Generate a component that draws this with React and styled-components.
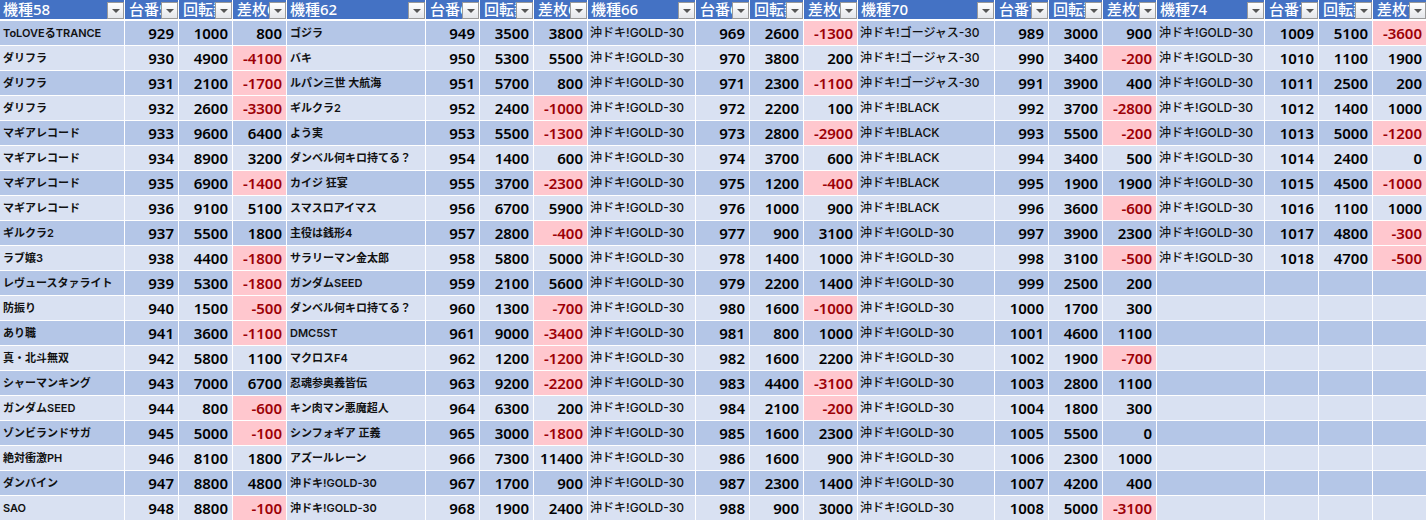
import React from 'react';
import styled, { createGlobalStyle } from 'styled-components';

const GlobalStyle = createGlobalStyle`
    html, body {
        margin: 0;
        padding: 0;
        background: #fff;
        overflow: hidden;
    }
`;

const FONT = `"Noto Sans", "Noto Sans CJK JP", sans-serif`;
const NAME_FONT = `Inter, "Noto Sans CJK JP", sans-serif`;

const gold = '沖ドキ!GOLD-30';
const gorgeous = '沖ドキ!ゴージャス-30';
const black = '沖ドキ!BLACK';

// each row: [name, 回転数, 差枚]. 台番 counts up from the group's first number
const groups = [
    {
        title: 58, width: 125, first: 929, light: false,
        rows: [
            ['ToLOVEるTRANCE', 1000, 800], ['ダリフラ', 4900, -4100], ['ダリフラ', 2100, -1700], ['ダリフラ', 2600, -3300],
            ['マギアレコード', 9600, 6400], ['マギアレコード', 8900, 3200], ['マギアレコード', 6900, -1400], ['マギアレコード', 9100, 5100],
            ['ギルクラ2', 5500, 1800], ['ラブ嬢3', 4400, -1800], ['レヴュースタァライト', 5300, -1800], ['防振り', 1500, -500],
            ['あり職', 3600, -1100], ['真・北斗無双', 5800, 1100], ['シャーマンキング', 7000, 6700], ['ガンダムSEED', 800, -600],
            ['ゾンビランドサガ', 5000, -100], ['絶対衝激PH', 8100, 1800], ['ダンバイン', 8800, 4800], ['SAO', 8800, -100],
        ],
    },
    {
        title: 62, width: 139, first: 949, light: false,
        rows: [
            ['ゴジラ', 3500, 3800], ['バキ', 5300, 5500], ['ルパン三世 大航海', 5700, 800], ['ギルクラ2', 2400, -1000],
            ['よう実', 5500, -1300], ['ダンベル何キロ持てる？', 1400, 600], ['カイジ 狂宴', 3700, -2300], ['スマスロアイマス', 6700, 5900],
            ['主役は銭形4', 2800, -400], ['サラリーマン金太郎', 5800, 5000], ['ガンダムSEED', 2100, 5600], ['ダンベル何キロ持てる？', 1300, -700],
            ['DMC5ST', 9000, -3400], ['マクロスF4', 1200, -1200], ['忍魂参奥義皆伝', 9200, -2200], ['キン肉マン悪魔超人', 6300, 200],
            ['シンフォギア 正義', 3000, -1800], ['アズールレーン', 7300, 11400], [gold, 1700, 900], [gold, 1900, 2400],
        ],
    },
    {
        title: 66, width: 108, first: 969, light: true,
        rows: [
            [gold, 2600, -1300], [gold, 3800, 200], [gold, 2300, -1100], [gold, 2200, 100],
            [gold, 2800, -2900], [gold, 3700, 600], [gold, 1200, -400], [gold, 1000, 900],
            [gold, 900, 3100], [gold, 1400, 1000], [gold, 2200, 1400], [gold, 1600, -1000],
            [gold, 800, 1000], [gold, 1600, 2200], [gold, 4400, -3100], [gold, 2100, -200],
            [gold, 1600, 2300], [gold, 1600, 900], [gold, 2300, 1400], [gold, 900, 3000],
        ],
    },
    {
        title: 70, width: 137, first: 989, light: true,
        rows: [
            [gorgeous, 3000, 900], [gorgeous, 3400, -200], [gorgeous, 3900, 400], [black, 3700, -2800],
            [black, 5500, -200], [black, 3400, 500], [black, 1900, 1900], [black, 3600, -600],
            [gold, 3900, 2300], [gold, 3100, -500], [gold, 2500, 200], [gold, 1700, 300],
            [gold, 4600, 1100], [gold, 1900, -700], [gold, 2800, 1100], [gold, 1800, 300],
            [gold, 5500, 0], [gold, 2300, 1000], [gold, 4200, 400], [gold, 5000, -3100],
        ],
    },
    {
        title: 74, width: 108, first: 1009, light: true,
        rows: [
            [gold, 5100, -3600], [gold, 1100, 1900], [gold, 2500, 200], [gold, 1400, 1000],
            [gold, 5000, -1200], [gold, 2400, 0], [gold, 4500, -1000], [gold, 1100, 1000],
            [gold, 4800, -300], [gold, 4700, -500],
            null, null, null, null, null, null, null, null, null, null,
        ],
    },
];

const Sheet = styled.div`
    display: flex;
    width: 1427px;
    height: 521px;
    overflow: hidden;
    font-family: ${FONT};
`;

const Group = styled.div`
    display: grid;
    grid-template-columns: ${(p) => p.$width}px 54px 54px 54px;
    grid-template-rows: 21px repeat(20, 25px);
`;

const HeaderCell = styled.div`
    position: relative;
    box-sizing: border-box;
    height: 21px;
    background: #4472c4;
    background-clip: padding-box;
    border-right: 1px solid #fff;
    border-bottom: 2px solid #fff;
    color: #fff;
    font-size: 15px;
    font-weight: 500;
    line-height: 18px;
    white-space: nowrap;
    overflow: hidden;
`;

const HeaderText = styled.span`
    display: block;
    padding-left: ${(p) => (p.$first ? 3 : 4)}px;
`;

const FilterButton = styled.span`
    position: absolute;
    top: 2px;
    right: 0;
    box-sizing: border-box;
    width: 17px;
    height: 17px;
    background: linear-gradient(#ffffff, #e4e6ea);
    border: 1px solid #9a9a9a;
    display: flex;
    align-items: center;
    justify-content: center;

    &::after {
        content: '';
        border-left: 4px solid transparent;
        border-right: 4px solid transparent;
        border-top: 4px solid #555;
        margin-top: 1px;
    }
`;

const Cell = styled.div`
    box-sizing: border-box;
    background: ${(p) => (p.$bad ? '#ffc7ce' : p.$odd ? '#b4c6e7' : '#d9e1f2')};
    background-clip: padding-box;
    border-right: 1px solid #fff;
    border-bottom: 1px solid #fff;
    white-space: nowrap;
    overflow: hidden;
`;

const NameCell = styled(Cell)`
    padding-left: ${(p) => (p.$light ? 2 : 3)}px;
    color: #111;
    font-family: ${NAME_FONT};
    font-size: ${(p) => (p.$light ? 12 : 11)}px;
    font-weight: ${(p) => (p.$light ? 500 : 600)};
    line-height: 24px;
`;

const NumCell = styled(Cell)`
    padding-right: 4px;
    color: ${(p) => (p.$bad ? '#9c0006' : '#000')};
    font-size: 15px;
    font-weight: 600;
    line-height: 24px;
    text-align: right;
`;

const Header = ({ label, first }) => (
    <HeaderCell>
        <HeaderText $first={first}>{label}</HeaderText>
        <FilterButton />
    </HeaderCell>
);

const App = () => (
    <>
        <GlobalStyle />
        <Sheet>
            {groups.map((group) => (
                <Group key={group.title} $width={group.width}>
                    <Header label={`機種${group.title}`} first />
                    <Header label={`台番${group.title + 1}`} />
                    <Header label={`回転数${group.title + 2}`} />
                    <Header label={`差枚${group.title + 3}`} />
                    {group.rows.map((row, i) => {
                        const odd = i % 2 === 0;
                        if (!row) {
                            return [0, 1, 2, 3].map((c) => <Cell key={`${i}-${c}`} $odd={odd} />);
                        }
                        const [name, spins, diff] = row;
                        return (
                            <React.Fragment key={i}>
                                <NameCell $odd={odd} $light={group.light}>{name}</NameCell>
                                <NumCell $odd={odd}>{group.first + i}</NumCell>
                                <NumCell $odd={odd}>{spins}</NumCell>
                                <NumCell $odd={odd} $bad={diff < 0}>{diff}</NumCell>
                            </React.Fragment>
                        );
                    })}
                </Group>
            ))}
        </Sheet>
    </>
);

export default App;
